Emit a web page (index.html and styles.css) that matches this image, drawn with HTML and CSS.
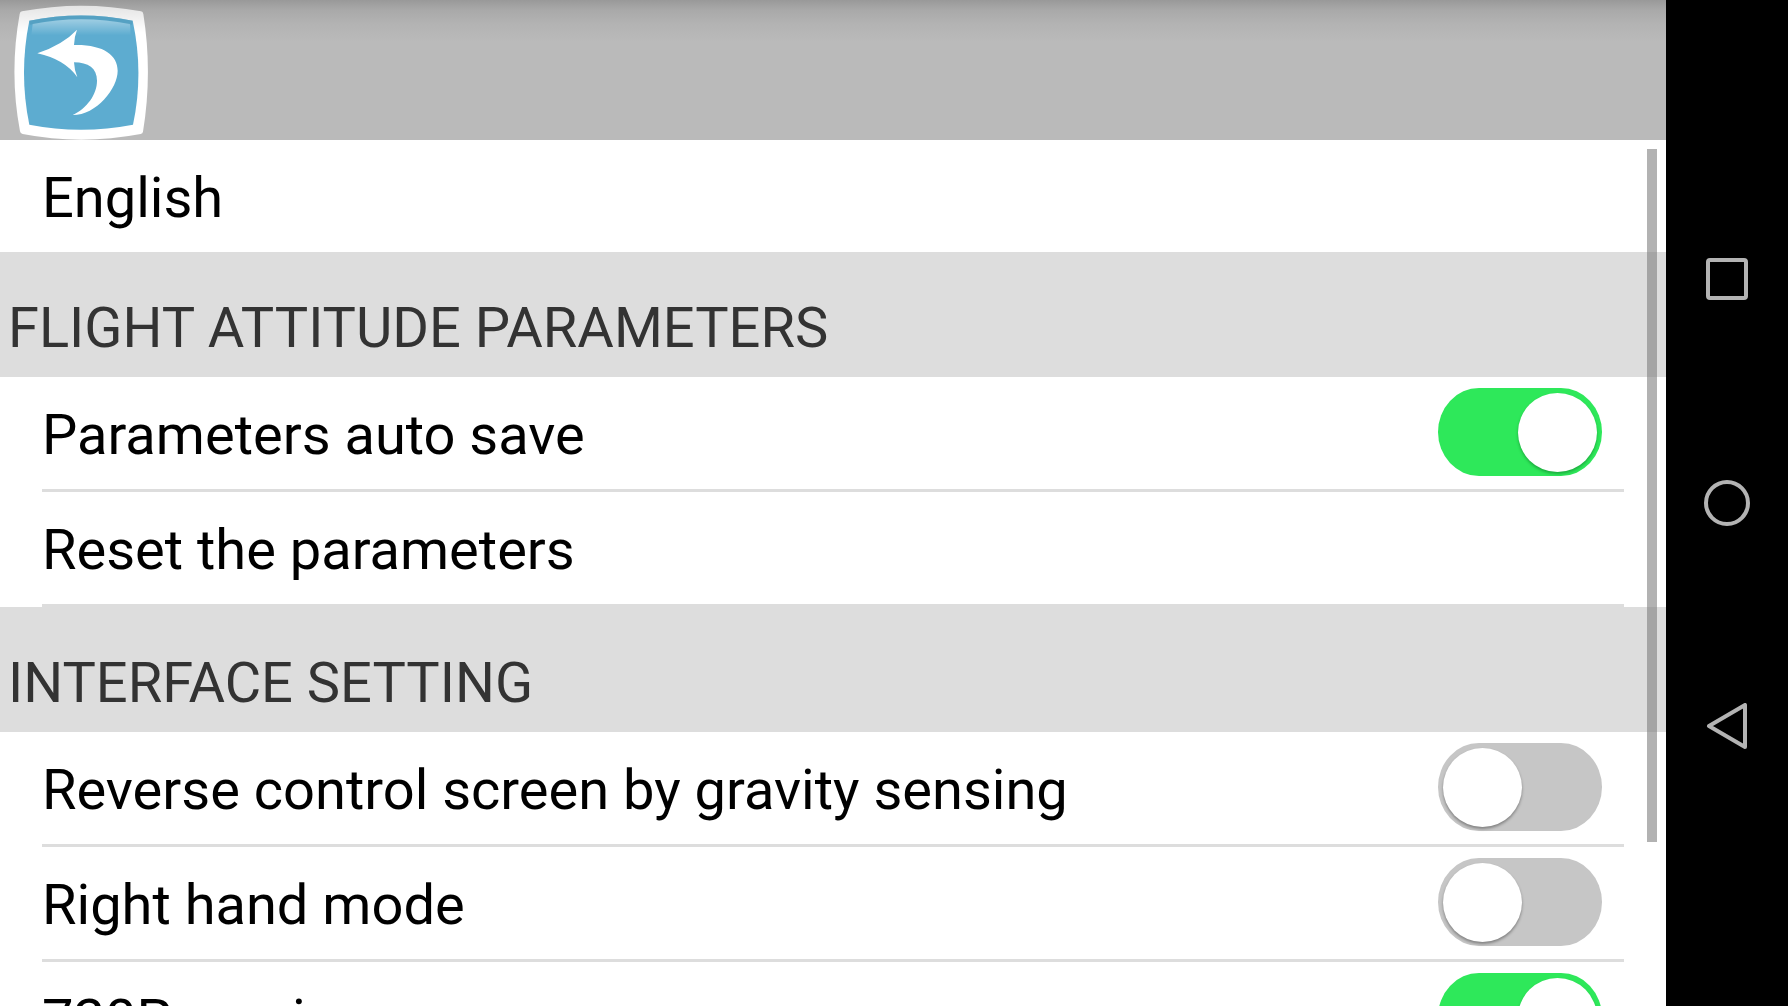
FILE: index.html
```html
<!DOCTYPE html>
<html lang="en">
<head>
    <meta charset="UTF-8">
    <meta name="viewport" content="width=device-width, initial-scale=1.0">
    <title>Settings</title>
    <link rel="stylesheet" href="styles.css">
</head>
<body>
    <div class="screen">
        <header class="topbar">
            <button class="back" type="button" aria-label="Back">
                <svg viewBox="42 15 402 405" width="134" height="135">
                    <defs>
                        <linearGradient id="frame" x1="0" y1="0" x2="0" y2="1">
                            <stop offset="0" stop-color="#e4e4e4"/>
                            <stop offset="0.2" stop-color="#fff"/>
                        </linearGradient>
                        <linearGradient id="fade" x1="0" y1="0" x2="0" y2="1">
                            <stop offset="0" stop-color="#fff" stop-opacity="0.4"/>
                            <stop offset="1" stop-color="#fff" stop-opacity="0"/>
                        </linearGradient>
                    </defs>
                    <path fill="url(#frame)" d="M66 34Q243 0 423 34Q429 35 430 42Q458 218 429 395Q428 401 422 402Q243 436 68 402Q61 401 60 394Q27 218 59 42Q60 35 66 34Z"/>
                    <path fill="#5dacd0" d="M88 62Q243 31 398 62Q432 218 399 374Q243 404 88 374Q56 218 88 62Z"/>
                    <path fill="#539dbd" opacity="0.7" d="M88 62Q243 31 398 62L396 74Q243 42 90 74Z"/>
                    <path fill="url(#fade)" d="M98 72Q243 44 390 72L392 106H94Z"/>
                    <path fill="#fff" d="M112 160Q190 133 231 89Q223 110 222 135C310 133 353 165 353 212C353 265 290 345 218 345C260 325 291 284 291 242C291 205 265 187 222 187Q223 210 232 232Q195 178 112 160Z"/>
                </svg>
            </button>
        </header>

        <main class="settings">
            <button class="row row-language" type="button">English</button>

            <h2 class="section">FLIGHT ATTITUDE PARAMETERS</h2>
            <div class="row">
                <label for="autoSave">Parameters auto save</label>
                <input class="toggle" type="checkbox" id="autoSave" checked>
            </div>
            <button class="row" type="button">Reset the parameters</button>

            <h2 class="section">INTERFACE SETTING</h2>
            <div class="row">
                <label for="reverse">Reverse control screen by gravity sensing</label>
                <input class="toggle" type="checkbox" id="reverse">
            </div>
            <div class="row">
                <label for="rightHand">Right hand mode</label>
                <input class="toggle" type="checkbox" id="rightHand">
            </div>
            <div class="row">
                <label for="preview">720P preview</label>
                <input class="toggle" type="checkbox" id="preview" checked>
            </div>
            <div class="scrollbar"></div>
        </main>
    </div>

    <nav class="navbar">
        <button type="button" aria-label="Recent apps">
            <svg viewBox="0 0 48 48" width="48" height="48">
                <rect x="5" y="5" width="38" height="38" rx="2"/>
            </svg>
        </button>
        <button type="button" aria-label="Home">
            <svg viewBox="0 0 48 48" width="48" height="48">
                <circle cx="24" cy="24" r="21"/>
            </svg>
        </button>
        <button type="button" aria-label="Go back">
            <svg viewBox="0 0 48 48" width="48" height="48">
                <path d="M6 23L42 2V44Z"/>
            </svg>
        </button>
    </nav>
</body>
</html>
```
FILE: styles.css
```css
* {
    box-sizing: border-box;
}

body {
    margin: 0;
    height: 100vh;
    display: flex;
    overflow: hidden;
    background: #000;
    font-family: Roboto, sans-serif;
    font-size: 56px;
}

button {
    padding: 0;
    border: none;
    background: none;
    color: inherit;
    font: inherit;
    text-align: left;
    cursor: pointer;
}

svg {
    display: block;
}

.screen {
    flex: 1;
    min-width: 0;
    display: flex;
    flex-direction: column;
    background: #fff;
}

.topbar {
    flex: none;
    display: flex;
    padding: 5px 14px 0;
    background: linear-gradient(#999 0, #a9a9a9 10px, #b3b3b3 24px, #bababa 42px);
}

.settings {
    position: relative;
    flex: 1;
    min-height: 0;
    overflow: hidden;
    display: flex;
    flex-direction: column;
}

.row {
    flex: none;
    display: flex;
    align-items: center;
    justify-content: space-between;
    height: 115px;
    margin: 0 42px;
    border-bottom: 3px solid #ddd;
    color: #000;
    line-height: 66px;
}

.row label,
button.row {
    padding-top: 4px;
}

.row-language {
    height: 112px;
    border-bottom: none;
}

.section {
    flex: none;
    height: 125px;
    margin: 0;
    padding: 43px 8px 0;
    background: #ddd;
    color: #333;
    font-size: 56px;
    font-weight: 400;
    line-height: 66px;
}

.toggle {
    appearance: none;
    flex: none;
    width: 164px;
    height: 88px;
    margin: 0 22px 2px 0;
    padding: 5px;
    border-radius: 41px / 44px;
    background: #c6c6c6;
    cursor: pointer;
}

.toggle::before {
    content: "";
    display: block;
    width: 79px;
    height: 79px;
    border-radius: 50%;
    background: #fff;
    box-shadow: 0 2px 3px rgba(0, 0, 0, 0.35);
}

.toggle:checked {
    background: #2ee85a;
}

.toggle:checked::before {
    margin-left: auto;
    box-shadow: 0 2px 3px rgba(0, 80, 20, 0.4);
}

/* overlay scroll indicator */
.scrollbar {
    position: absolute;
    top: 9px;
    right: 9px;
    width: 10px;
    height: 80%;
    background: rgba(127, 127, 127, 0.6);
}

.navbar {
    flex: none;
    width: 122px;
    display: flex;
    flex-direction: column;
    justify-content: center;
}

.navbar button {
    height: 224px;
    display: flex;
    align-items: center;
    justify-content: center;
}

.navbar svg {
    fill: none;
    stroke: #b3b3b3;
    stroke-width: 4px;
    stroke-linejoin: round;
}
```
